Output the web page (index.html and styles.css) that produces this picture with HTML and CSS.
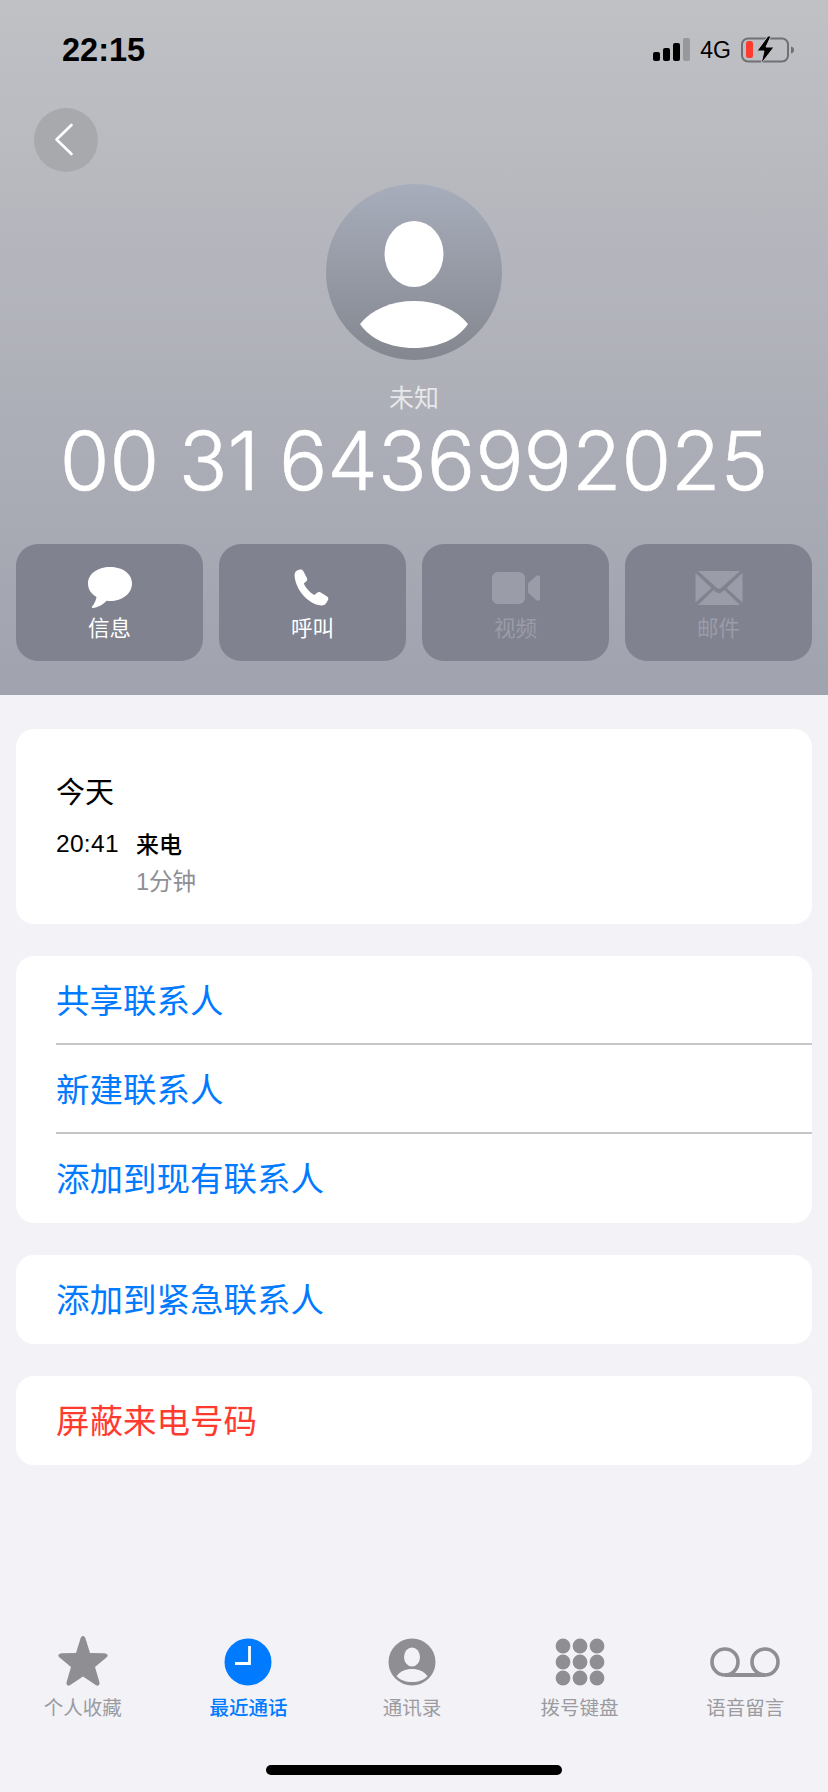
FILE: index.html
```html
<!DOCTYPE html>
<html lang="zh">
<head>
<meta charset="utf-8">
<title>未知</title>
<link rel="stylesheet" href="styles.css">
</head>
<body>
<div class="page">
  <header class="hero">
    <div class="status">
      <span class="clock">22:15</span>
      <div class="status-icons">
        <svg class="signal" width="38" height="24" viewBox="0 0 38 24"><rect x="0" y="14" width="7" height="9" rx="2"/><rect x="10" y="10" width="7" height="13" rx="2"/><rect x="20" y="5" width="7" height="18" rx="2"/><rect class="signal-off" x="30" y="0" width="7" height="23" rx="2"/></svg>
        <span class="net">4G</span>
        <svg class="battery" width="54" height="28" viewBox="0 0 54 28"><rect x="1" y="2.5" width="46" height="23" rx="6" fill="none" stroke="#6f7074" stroke-width="2"/><rect x="5" y="5" width="7" height="17" rx="2.5" fill="#ff3b30"/><path d="M50 10.500c2 .5 3 1.800 3 3.500s-1 3-3 3.500z" fill="#6f7074"/><path d="M27 0 16 15h7l-3 13 13-17h-8l5-11z" fill="#000" stroke="#c0c1c5" stroke-width="1"/></svg>
      </div>
    </div>
    <button class="back" type="button" aria-label="返回">
      <svg width="24" height="34" viewBox="0 0 24 34"><path d="M17.500 2 2.500 16.500 17.500 31" fill="none" stroke="#fff" stroke-width="2.600" stroke-linecap="round" stroke-linejoin="round"/></svg>
    </button>
    <div class="avatar">
      <svg width="176" height="176" viewBox="0 0 176 176"><ellipse cx="88" cy="70" rx="29.500" ry="33" fill="#fff"/><path d="M34 140c12-15 32-23 54-23s42 8 54 23c-10 15-30 24-54 24s-44-9-54-24z" fill="#fff"/></svg>
    </div>
    <div class="name">未知</div>
    <div class="number">00 31 6436992025</div>
    <div class="actions">
      <div class="action">
        <svg width="46" height="42" viewBox="0 0 46 42"><path d="M23 0C10.500 0 1 7 1 16.500c0 6 3.500 10.700 8.500 13.500-.5 3.500-2.500 7.500-4.500 9.500-.6.8 0 1.600 1 1.400 4.500-.5 10-3 13.500-7.200 1.300.2 2.400.3 3.500.3 12.500 0 22-7.500 22-17.500S35.500 0 23 0z" fill="#fff"/></svg>
        <span>信息</span>
      </div>
      <div class="action">
        <svg width="38" height="38" viewBox="0 0 38 38"><path d="M3 1.500 6 .5c1.500-.4 2.700.2 3.300 1.500l3.700 7.200c.5 1.200.2 2.300-.7 3.100l-2.500 2.200c1.500 4 6.500 9.500 10.500 11.500l2.800-2.300c1-.8 2.100-1 3.200-.4l6.800 4.200c1.200.7 1.600 2 1 3.200l-1.500 2.900c-1 2-3.200 3.100-5.500 2.900C14 35 2 21 .6 7.500.3 5 1 2.700 3 1.500z" fill="#fff"/></svg>
        <span>呼叫</span>
      </div>
      <div class="action disabled">
        <svg width="48" height="42" viewBox="0 0 48 42"><rect x="0" y="5" width="33" height="32" rx="6" fill="#9a9ca8"/><path d="M36 17.500c0-1 .4-1.700 1-2.300l7.500-6.500c1.300-1 3.500-.4 3.500 1.600v21.400c0 2-2.200 2.600-3.500 1.600L37 26.800c-.6-.6-1-1.300-1-2.300z" fill="#9a9ca8"/></svg>
        <span>视频</span>
      </div>
      <div class="action disabled">
        <svg width="48" height="42" viewBox="0 0 48 42"><path d="M3 4h42L26 21c-1.300 1.100-2.700 1.100-4 0zM.5 6 16.500 21 .5 35.500zM47.500 6v29.500L31.500 21zM3 38l15.500-15 2 1.800c2.200 1.800 4.800 1.800 7 0l2-1.800L45 38z" fill="#9a9ca8"/></svg>
        <span>邮件</span>
      </div>
    </div>
  </header>

  <main class="content">
    <section class="card call-log">
      <div class="log-day">今天</div>
      <div class="log-row">
        <span class="log-time">20:41</span>
        <div class="log-detail">
          <div class="log-type">来电</div>
          <div class="log-len">1分钟</div>
        </div>
      </div>
    </section>
    <section class="card">
      <div class="row">共享联系人</div>
      <div class="row">新建联系人</div>
      <div class="row">添加到现有联系人</div>
    </section>
    <section class="card">
      <div class="row">添加到紧急联系人</div>
    </section>
    <section class="card">
      <div class="row danger">屏蔽来电号码</div>
    </section>
  </main>

  <nav class="tabs">
    <div class="tab">
      <svg width="54" height="52" viewBox="0 0 54 52"><path d="M27 0c1.300 0 2 1 2.500 2.500L34 17l14 .3c3.500.1 4.800 2.300 2.400 4.300L39 31l4.300 14.800c1 3.300-1.200 4.900-3.600 3.100L27 40.500l-12.700 8.400c-2.400 1.800-4.600.2-3.600-3.100L15 31 3.600 21.600c-2.400-2-1.100-4.200 2.400-4.300L20 17l4.500-14.500C25 1 25.700 0 27 0z" fill="#8e8e93"/></svg>
      <span>个人收藏</span>
    </div>
    <div class="tab active">
      <svg width="54" height="52" viewBox="0 0 54 52"><circle cx="27" cy="26" r="23.500" fill="#007aff"/><path d="M28.500 10v17.500H14" fill="none" stroke="#fff" stroke-width="2.800"/></svg>
      <span>最近通话</span>
    </div>
    <div class="tab tab-contacts">
      <svg width="54" height="52" viewBox="0 0 54 52"><circle cx="27" cy="26" r="23.500" fill="#8e8e93"/><ellipse cx="27" cy="21" rx="8" ry="9.500" fill="#f2f2f7"/><path d="M11.500 40c3.500-4.500 9-7 15.500-7s12 2.500 15.500 7c-3.500 4-9 6-15.500 6s-12-2-15.500-6z" fill="#f2f2f7"/></svg>
      <span>通讯录</span>
    </div>
    <div class="tab">
      <svg width="54" height="52" viewBox="0 0 54 52"><g fill="#8e8e93"><circle cx="10" cy="10" r="7.400"/><circle cx="27" cy="10" r="7.400"/><circle cx="44" cy="10" r="7.400"/><circle cx="10" cy="26" r="7.400"/><circle cx="27" cy="26" r="7.400"/><circle cx="44" cy="26" r="7.400"/><circle cx="10" cy="42" r="7.400"/><circle cx="27" cy="42" r="7.400"/><circle cx="44" cy="42" r="7.400"/></g></svg>
      <span>拨号键盘</span>
    </div>
    <div class="tab">
      <svg width="70" height="52" viewBox="0 0 70 52"><g fill="none" stroke="#8e8e93" stroke-width="3.600"><circle cx="15" cy="26" r="13"/><circle cx="55" cy="26" r="13"/><path d="M15 39h40" stroke-width="4"/></g></svg>
      <span>语音留言</span>
    </div>
  </nav>
  <div class="home-wrap"><div class="home"></div></div>
</div>
</body>
</html>
```

FILE: styles.css
```css
* { box-sizing: border-box; }

html, body {
  margin: 0;
  padding: 0;
}

body {
  font-family: "Liberation Sans", "Noto Sans CJK SC", sans-serif;
  background: #f2f2f7;
}

.page {
  width: 828px;
  height: 1792px;
  display: flex;
  flex-direction: column;
  overflow: hidden;
}

.hero {
  height: 695px;
  flex: none;
  background: linear-gradient(180deg, #c0c1c5 0%, #a0a2ae 100%);
  display: flex;
  flex-direction: column;
}

.status {
  height: 100px;
  padding: 0 33px 0 62px;
  display: flex;
  align-items: center;
  justify-content: space-between;
}

.clock {
  font-size: 32.5px;
  font-weight: 700;
  color: #000;
}

.status-icons {
  display: flex;
  align-items: center;
}

.signal { fill: #000; margin-right: 9px; }
.signal-off { fill: #97989c; }

.net {
  font-size: 23px;
  color: #000;
  margin-right: 10px;
}

.back {
  width: 64px;
  height: 64px;
  margin: 8px 0 0 34px;
  padding: 0;
  border: 0;
  border-radius: 50%;
  background: #a8a9ad;
  display: flex;
  align-items: center;
  justify-content: center;
}

.avatar {
  width: 176px;
  height: 176px;
  margin: 12px auto 0;
  border-radius: 50%;
  background: linear-gradient(180deg, #a7adbb 0%, #84878f 100%);
  overflow: hidden;
}

.avatar svg { display: block; }

.name {
  margin-top: 20px;
  height: 36px;
  line-height: 36px;
  text-align: center;
  font-size: 25px;
  color: rgba(255, 255, 255, 0.72);
}

.number {
  height: 90px;
  line-height: 90px;
  text-align: center;
  font-family: "Inter", "Liberation Sans", sans-serif;
  font-weight: 300;
  font-size: 80.5px;
  word-spacing: -3px;
  -webkit-text-stroke: 0.6px #fff;
  color: #fff;
  white-space: nowrap;
}

.actions {
  margin-top: 38px;
  padding: 0 16px;
  display: grid;
  grid-template-columns: repeat(4, 1fr);
  gap: 16px;
}

.action {
  height: 117px;
  border-radius: 22px;
  background: #80828f;
  color: #fff;
  font-size: 21.5px;
  display: flex;
  flex-direction: column;
  align-items: center;
  padding-top: 23px;
}

.action svg { display: block; height: 42px; }
.action span { margin-top: 7px; line-height: 26px; }
.action.disabled { color: #9a9ca8; }

.content {
  flex: none;
  padding: 34px 16px 0;
  display: flex;
  flex-direction: column;
  gap: 32px;
}

.card {
  background: #fff;
  border-radius: 18px;
  overflow: hidden;
}

.call-log {
  height: 195px;
  padding: 44px 40px 0;
}

.log-day {
  font-size: 29px;
  line-height: 40px;
  color: #000;
}

.log-row {
  margin-top: 16px;
  display: flex;
}

.log-time {
  width: 80px;
  font-size: 24.5px;
  letter-spacing: 0.3px;
  line-height: 30px;
  color: #000;
}

.log-type {
  font-size: 23px;
  font-weight: 500;
  line-height: 32px;
  color: #000;
}

.log-len {
  margin-top: 6px;
  font-size: 23.5px;
  line-height: 30px;
  color: #8e8e93;
}

.row {
  height: 89px;
  padding-top: 4px;
  line-height: 84px;
  margin-left: 40px;
  font-size: 33.5px;
  color: #007aff;
  border-bottom: 2px solid #c6c6c8;
}

.row:last-child { border-bottom: 0; }
.row.danger { color: #ff3b30; }

.tabs {
  margin-top: auto;
  height: 101px;
  padding-bottom: 9px;
  display: grid;
  grid-template-columns: repeat(5, 1fr);
}

.tab {
  display: flex;
  flex-direction: column;
  align-items: center;
  font-size: 19.5px;
  color: #9b9ba0;
}

.tab svg { display: block; height: 52px; }
.tab span { margin-top: 6px; line-height: 28px; }
.tab.active { color: #007aff; font-weight: 500; }
.tab-contacts { padding-right: 4px; }

.home-wrap {
  flex: none;
  height: 55px;
  padding-top: 28px;
  display: flex;
  justify-content: center;
}

.home {
  width: 296px;
  height: 10px;
  border-radius: 5px;
  background: #000;
}
```
